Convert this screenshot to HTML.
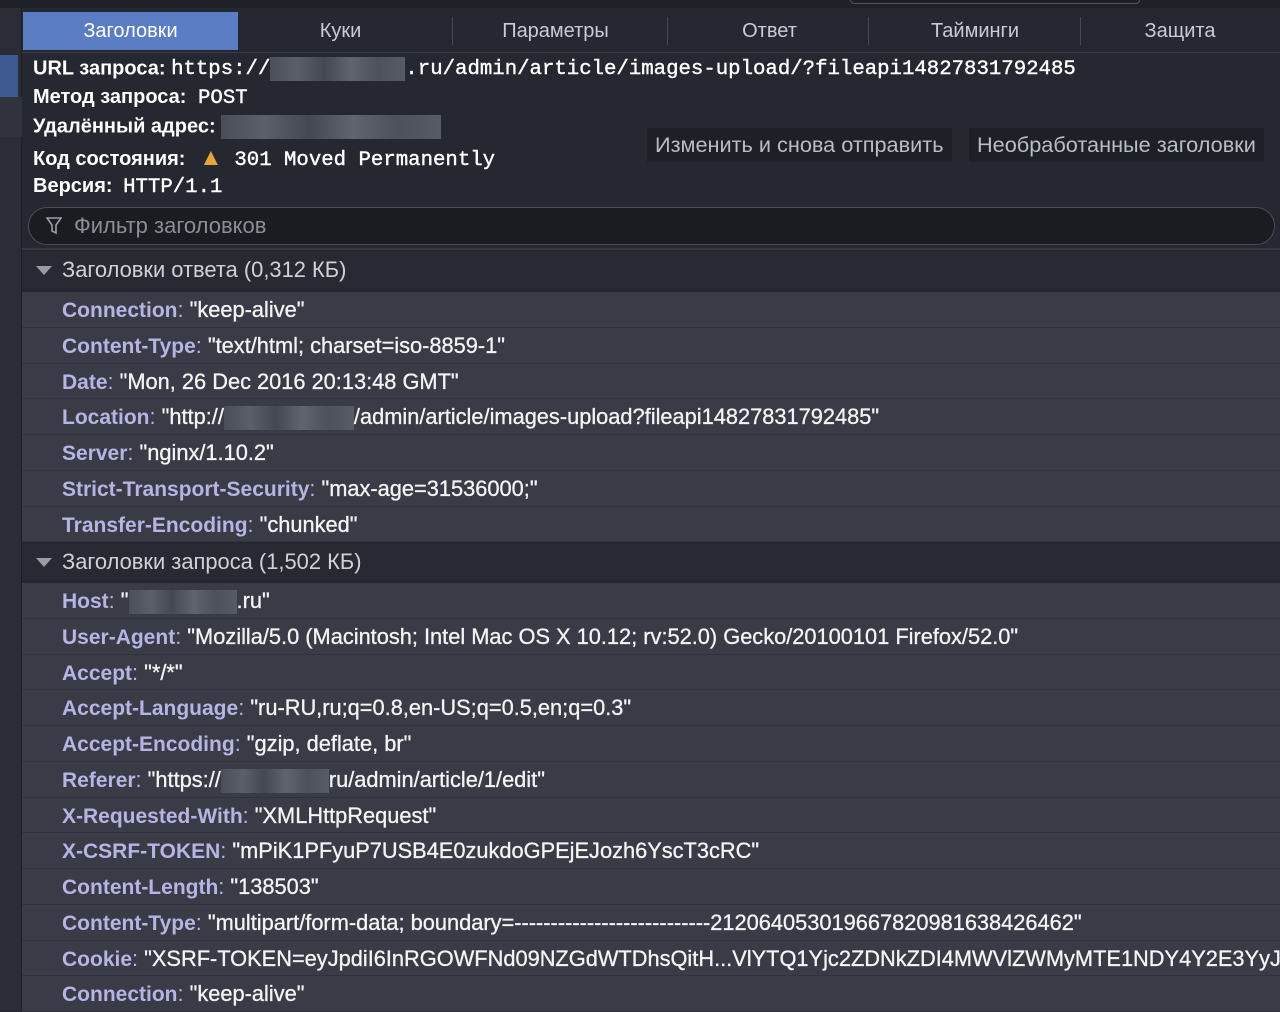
<!DOCTYPE html><html><head><meta charset="utf-8"><style>
*{margin:0;padding:0;box-sizing:border-box}
body{width:1280px;height:1011px;overflow:hidden;background:#252831;font-family:"Liberation Sans",sans-serif;color:#eee;position:relative}
.abs{position:absolute}
.tab{position:absolute;top:12px;height:38px;line-height:38px;text-align:center;font-size:20px;color:#c9ccd2}
.sep{position:absolute;top:17px;width:1px;height:28px;background:#444852}
.mono{font-family:"Liberation Mono",monospace;font-size:20.7px;-webkit-text-stroke:0.4px #fff}
.info{position:absolute;left:33px;font-size:20px;font-weight:bold;color:#fff;white-space:nowrap}
.info span{font-weight:normal}
.blur{display:inline-block;vertical-align:middle;height:24px;background:linear-gradient(90deg,#4a4e59,#5b5f69,#444853,#60646d,#4d515b,#575b65);}
.btn{position:absolute;top:128px;height:34px;line-height:34px;background:#1d2027;color:#b9bdc4;font-size:21.7px;padding:0 8px}
.sec{position:absolute;left:22px;width:1258px;height:36px;background:#272a33;font-size:21.9px;color:#d0d2d6;line-height:36px;padding-left:40px}
.sec:before{content:"";position:absolute;left:14px;top:14px;border-left:8px solid transparent;border-right:8px solid transparent;border-top:9px solid #9a9ca3}
.row{position:absolute;left:22px;width:1258px;height:35.75px;overflow:hidden;background:#393c47;border-bottom:1px solid #30333d;font-size:21.8px;line-height:35px;padding-left:40px;color:#f4f4f4;white-space:nowrap;-webkit-text-stroke:0.3px #f4f4f4}
.row b{color:#b6b4e2;font-weight:bold;font-size:21px;-webkit-text-stroke:0}
.row i{font-style:normal;color:#b6b4e2;-webkit-text-stroke:0}
</style></head><body>
<div class="abs" style="left:0;top:0;width:1280px;height:8px;background:#1e2128"></div>
<div class="abs" style="left:850px;top:0;width:290px;height:4px;border:1px solid #555;border-top:none;border-radius:0 0 10px 10px"></div>
<div class="abs" style="left:0;top:8px;width:22px;height:1003px;background:#2a2d36;border-right:1px solid #1c1f25"></div>
<div class="abs" style="left:0;top:55px;width:18px;height:42px;background:#3f5a90"></div>
<div class="abs" style="left:0;top:97px;width:22px;height:40px;background:#30333d"></div>
<div class="abs" style="left:22px;top:52px;width:1258px;height:1px;background:#3a3d47"></div>
<div class="tab" style="left:23px;width:215px;background:#5a7dc4;color:#fff">Заголовки</div>
<div class="tab" style="left:238px;width:205px">Куки</div>
<div class="sep" style="left:452px"></div>
<div class="tab" style="left:452px;width:207px">Параметры</div>
<div class="sep" style="left:667px"></div>
<div class="tab" style="left:667px;width:205px">Ответ</div>
<div class="sep" style="left:868px"></div>
<div class="tab" style="left:868px;width:214px">Тайминги</div>
<div class="sep" style="left:1080px"></div>
<div class="tab" style="left:1080px;width:200px">Защита</div>

<div class="info" style="top:57px">URL запроса: <span class="mono">https://<span class="blur" style="width:135px"></span>.ru/admin/article/images-upload/?fileapi14827831792485</span></div>
<div class="info" style="top:86px">Метод запроса: <span class="mono" style="margin-left:6px">POST</span></div>
<div class="info" style="top:115px">Удалённый адрес: <span class="blur" style="width:220px"></span></div>
<div class="info" style="top:144px">Код состояния: <span style="color:#e8a33a;font-size:24px;margin-left:8px">▲</span> <span class="mono" style="margin-left:6px">301 Moved Permanently</span></div>
<div class="info" style="top:175px">Версия: <span class="mono" style="margin-left:5px">HTTP/1.1</span></div>
<div class="btn" style="left:647px">Изменить и снова отправить</div>
<div class="btn" style="left:969px">Необработанные заголовки</div>

<div class="abs" style="left:28px;top:207px;width:1247px;height:38px;border:1px solid #4a4e58;border-radius:19px;background:#1a1c21;font-size:22px;color:#8a8e96;line-height:36px;padding-left:45px">Фильтр заголовков</div>
<svg class="abs" style="left:46px;top:217px" width="16" height="18" viewBox="0 0 16 18"><path d="M1 1h14l-5 7v8l-4-2V8z" fill="none" stroke="#9a9ea6" stroke-width="1.6"/></svg>
<div class="abs" style="left:22px;top:248px;width:1258px;height:2px;background:#353842"></div>

<div class="sec" style="top:252px">Заголовки ответа (0,312 КБ)</div>
<div class="row" style="top:292px"><b>Connection</b><i>:</i> "keep-alive"</div>
<div class="row" style="top:327.75px"><b>Content-Type</b><i>:</i> "text/html; charset=iso-8859-1"</div>
<div class="row" style="top:363.5px"><b>Date</b><i>:</i> "Mon, 26 Dec 2016 20:13:48 GMT"</div>
<div class="row" style="top:399.25px"><b>Location</b><i>:</i> "http://<span class="blur" style="width:130px"></span>/admin/article/images-upload?fileapi14827831792485"</div>
<div class="row" style="top:435px"><b>Server</b><i>:</i> "nginx/1.10.2"</div>
<div class="row" style="top:470.75px"><b>Strict-Transport-Security</b><i>:</i> "max-age=31536000;"</div>
<div class="row" style="top:506.5px"><b>Transfer-Encoding</b><i>:</i> "chunked"</div>

<div class="sec" style="top:544px">Заголовки запроса (1,502 КБ)</div>
<div class="row" style="top:583px"><b>Host</b><i>:</i> "<span class="blur" style="width:108px"></span>.ru"</div>
<div class="row" style="top:618.75px"><b>User-Agent</b><i>:</i> "Mozilla/5.0 (Macintosh; Intel Mac OS X 10.12; rv:52.0) Gecko/20100101 Firefox/52.0"</div>
<div class="row" style="top:654.5px"><b>Accept</b><i>:</i> "*/*"</div>
<div class="row" style="top:690.25px"><b>Accept-Language</b><i>:</i> "ru-RU,ru;q=0.8,en-US;q=0.5,en;q=0.3"</div>
<div class="row" style="top:726px"><b>Accept-Encoding</b><i>:</i> "gzip, deflate, br"</div>
<div class="row" style="top:761.75px"><b>Referer</b><i>:</i> "https://<span class="blur" style="width:108px"></span>ru/admin/article/1/edit"</div>
<div class="row" style="top:797.5px"><b>X-Requested-With</b><i>:</i> "XMLHttpRequest"</div>
<div class="row" style="top:833.25px"><b>X-CSRF-TOKEN</b><i>:</i> "mPiK1PFyuP7USB4E0zukdoGPEjEJozh6YscT3cRC"</div>
<div class="row" style="top:869px"><b>Content-Length</b><i>:</i> "138503"</div>
<div class="row" style="top:904.75px"><b>Content-Type</b><i>:</i> "multipart/form-data; boundary=---------------------------212064053019667820981638426462"</div>
<div class="row" style="top:940.5px"><b>Cookie</b><i>:</i> "XSRF-TOKEN=eyJpdiI6InRGOWFNd09NZGdWTDhsQitH...VlYTQ1Yjc2ZDNkZDI4MWVlZWMyMTE1NDY4Y2E3YyJ9"</div>
<div class="row" style="top:976.25px"><b>Connection</b><i>:</i> "keep-alive"</div>
</body></html>
